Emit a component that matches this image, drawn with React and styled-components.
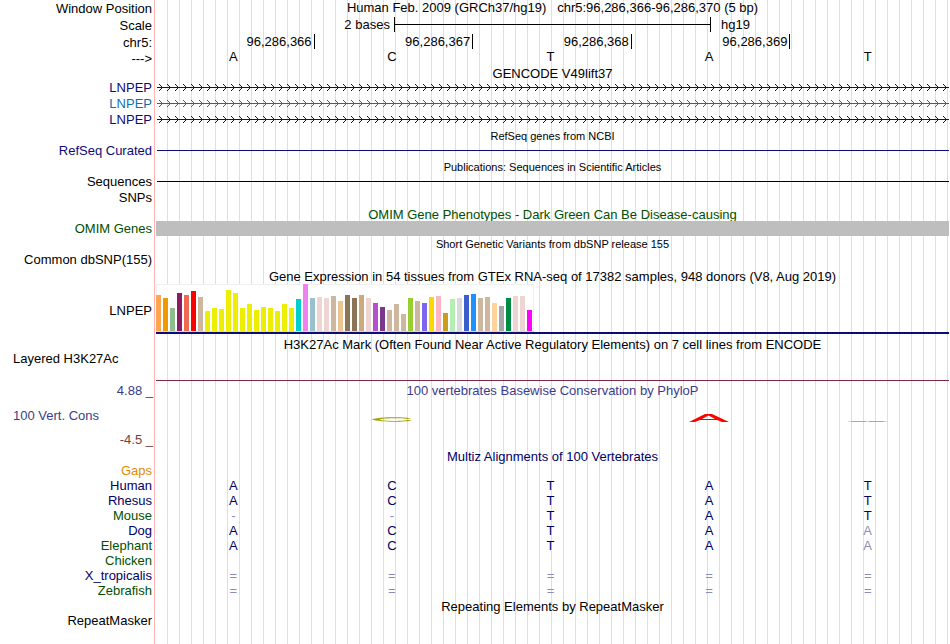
import React from "react";
import styled, { createGlobalStyle } from "styled-components";

const ink = {
  black: "#000000",
  navy: "#0c0c78",
  deep: "#000064",
  blue: "#0e6fb0",
  green: "#005000",
  orange: "#e68a00",
  violet: "#3c3c8c",
  brown: "#783c3c",
  pale: "#8c8cb8",
};

const GlobalStyle = createGlobalStyle`
  body {
    margin: 0;
    background: #ffffff;
    color: ${ink.black};
    font-family: "Liberation Sans", Arial, Helvetica, sans-serif;
    font-size: 13px;
    line-height: 15px;
  }
`;

const Browser = styled.main`
  box-sizing: border-box;
  min-height: 100vh;
  padding-right: 1px;
  background-image:
    linear-gradient(to right, #ffffff 154px, #ffb4b4 154px, #ffb4b4 155px, #ffffff 155px, #ffffff 156px, transparent 156px),
    linear-gradient(to right, transparent 11px, #dcdcf8 11px);
  background-size: auto, 12px 12px;
  background-position: 0 0, 156px 0;
`;

const Row = styled.div`
  display: grid;
  grid-template-columns: 156px minmax(0, 1fr);
  height: ${(p) => p.$h || 16}px;
`;

const Label = styled.div`
  box-sizing: border-box;
  display: flex;
  align-items: ${(p) => (p.$middle ? "center" : "flex-start")};
  justify-content: ${(p) => (p.$left ? "flex-start" : "flex-end")};
  padding: 0 ${(p) => (p.$axis ? 3 : 4)}px 0 13px;
  color: ${(p) => p.$color || ink.black};
  white-space: nowrap;
`;

const Track = styled.div`
  min-width: 0;
  display: flex;
  flex-direction: column;
  justify-content: ${(p) => p.$align || "flex-start"};
  overflow: ${(p) => (p.$clip ? "hidden" : "visible")};
`;

const LineTrack = styled(Track)`
  justify-content: center;
  padding-bottom: 1px;
`;

const Title = styled.h2`
  margin: 0;
  flex: none;
  font-size: ${(p) => (p.$small ? 11 : 13)}px;
  font-weight: 400;
  line-height: ${(p) => (p.$tight ? 15 : 17)}px;
  text-align: center;
  white-space: pre;
  color: ${(p) => p.$color || ink.black};
`;

const ScaleGrid = styled.div`
  display: grid;
  grid-template-columns: 3fr 4fr 3fr;
  height: 15px;
`;

const ScaleText = styled.span`
  padding: 0 ${(p) => (p.$end ? 10 : 4)}px;
  text-align: ${(p) => (p.$end ? "left" : "right")};
`;

const ScaleBar = styled.div`
  border: solid ${ink.black};
  border-width: 0 1px;
  background: linear-gradient(${ink.black}, ${ink.black}) center / 100% 1px no-repeat;
`;

const BaseGrid = styled.div`
  display: grid;
  grid-template-columns: repeat(5, minmax(0, 1fr));
`;

const Tick = styled.span`
  box-sizing: border-box;
  height: 15px;
  padding-right: 2px;
  border-right: 1px solid ${(p) => (p.$last ? "transparent" : ink.black)};
  text-align: right;
`;

const Base = styled.span`
  padding-right: 4px;
  line-height: 13px;
  text-align: center;
`;

const LogoCell = styled.span`
  display: flex;
  justify-content: center;
  padding: 6px 4px 0 0;
`;

const Rule = styled.div`
  height: ${(p) => p.$h || 1}px;
  margin-left: ${(p) => (p.$inset ? 1 : 0)}px;
  background: ${(p) => p.$color};
`;

const Block = styled.div`
  height: 15px;
  background: #bebebe;
`;

const Drawing = styled.svg`
  display: block;
  width: ${(p) => p.$w || "100%"};
  height: ${(p) => p.$h}px;
`;

const Alignment = styled.table`
  width: 100%;
  table-layout: fixed;
  border-collapse: collapse;
`;

const Species = styled.th`
  width: 152px;
  height: 15px;
  padding: 0 4px 0 0;
  font-weight: 400;
  text-align: right;
  color: ${(p) => p.$color};
`;

const Aligned = styled.td`
  padding: 0 4px 0 0;
  text-align: center;
  color: ${(p) => (p.$faint ? ink.pale : ink.deep)};
`;

const tissues = [
  [36, "#ffa54f"], [33, "#ee9a00"], [23, "#8fbc8f"], [38, "#8b1c62"], [36, "#ee6a50"], [40, "#ff0000"],
  [34, "#cdb79e"], [20, "#eeee00"], [23, "#eeee00"], [22, "#eeee00"], [41, "#eeee00"], [38, "#eeee00"],
  [23, "#eeee00"], [27, "#eeee00"], [21, "#eeee00"], [24, "#eeee00"], [23, "#eeee00"], [20, "#eeee00"],
  [27, "#eeee00"], [23, "#eeee00"], [32, "#00cdcd"], [47, "#ee82ee"], [33, "#9ac0cd"], [34, "#eed5d2"],
  [33, "#eed5d2"], [35, "#cdb79e"], [30, "#eec591"], [36, "#8b7355"], [33, "#8b7355"], [36, "#cdaa7d"],
  [33, "#eed5d2"], [28, "#b452cd"], [24, "#7a378b"], [21, "#cdb79e"], [27, "#cdb79e"], [17, "#cdb79e"],
  [33, "#9acd32"], [30, "#cdb79e"], [28, "#7a67ee"], [34, "#ffd700"], [35, "#ffb6c1"], [18, "#cd9b1d"],
  [32, "#b4eeb4"], [33, "#d9d9d9"], [36, "#3a5fcd"], [37, "#1e90ff"], [33, "#cdb79e"], [34, "#cdb79e"],
  [28, "#ffd39b"], [25, "#a6a6a6"], [33, "#008b45"], [35, "#eed5d2"], [35, "#eed5d2"], [21, "#ff00ff"],
];

const species = [
  ["Gaps", ink.orange, "     "],
  ["Human", ink.deep, "ACTAT"],
  ["Rhesus", ink.deep, "ACTAT"],
  ["Mouse", ink.green, "--TAT"],
  ["Dog", ink.deep, "ACTAa"],
  ["Elephant", ink.green, "ACTAa"],
  ["Chicken", ink.green, "     "],
  ["X_tropicalis", ink.deep, "====="],
  ["Zebrafish", ink.green, "====="],
];

const transcripts = [
  { id: "tx1", color: ink.navy },
  { id: "tx2", color: ink.blue },
  { id: "tx3", color: ink.navy },
];

function TitleRow({ children, h = 15, small, color, tight, clip }) {
  return (
    <Row $h={h}>
      <span />
      <Track $clip={clip}>
        <Title $small={small} $color={color} $tight={tight}>{children}</Title>
      </Track>
    </Row>
  );
}

function Transcript({ id, color }) {
  return (
    <Row>
      <Label $color={color}>LNPEP</Label>
      <Track>
        <Drawing $h={15} shapeRendering="crispEdges" aria-hidden="true">
          <defs>
            <pattern id={id} x="1" y="0" width="8" height="15" patternUnits="userSpaceOnUse">
              <path
                d="M2 4h1v1h-1z M3 5h1v1h-1z M4 6h1v1h-1z M5 7h1v1h-1z M4 8h1v1h-1z M3 9h1v1h-1z M2 10h1v1h-1z"
                fill={color}
              />
            </pattern>
          </defs>
          <rect x="1" y="0" width="100%" height="15" fill={`url(#${id})`} />
          <rect x="1" y="7" width="100%" height="1" fill={color} />
        </Drawing>
      </Track>
    </Row>
  );
}

function Expression() {
  return (
    <Drawing $w="379px" $h={48} viewBox="0 0 379 48" shapeRendering="crispEdges" role="img" aria-label="LNPEP expression by tissue">
      <rect x="0" y="0" width="378" height="48" fill="#f0f0f0" />
      <rect x="1" y="1" width="376" height="46" fill="#ffffff" />
      <rect x="0" y="47" width="378" height="1" fill="#d8d8d8" />
      {tissues.map(([value, color], i) => (
        <rect key={i} x={i * 7} y={47 - value} width="5" height={value} fill={color} />
      ))}
    </Drawing>
  );
}

function ConservationLogo() {
  return (
    <BaseGrid>
      <span />
      <LogoCell>
        <Drawing $w="42px" $h={9} viewBox="0 0 42 9" aria-hidden="true">
          <path d="M40 4.6C36 3 9 2.6 1 5.5C9 8.4 36 8.2 41 6.2L36 6C32 7.3 12 7.3 8 5.5C12 3.9 32 3.9 36 5Z" fill="#a0a000" />
        </Drawing>
      </LogoCell>
      <span />
      <LogoCell>
        <Drawing $w="42px" $h={9} viewBox="0 0 42 9" aria-hidden="true">
          <path d="M1 8L17 0H24L41 8H34L29 6H12L7 8ZM14 5H27L20.5 1.5Z" fill="#ff0000" fillRule="evenodd" />
        </Drawing>
      </LogoCell>
      <LogoCell>
        <Drawing $w="42px" $h={9} viewBox="0 0 42 9" aria-hidden="true">
          <path d="M4 7H19V8H4Z M22 7H37V8H22Z" fill="#f08c8c" />
          <path d="M1 7H4V8H1Z M19 7H22V8H19Z M37 7H40V8H37Z" fill="#f8c8c8" />
        </Drawing>
      </LogoCell>
    </BaseGrid>
  );
}

export default function App() {
  return (
    <>
      <GlobalStyle />
      <Browser>
        <Row $h={17}>
          <Label $middle>Window Position</Label>
          <Track>
            <Title $tight>{"Human Feb. 2009 (GRCh37/hg19)   chr5:96,286,366-96,286,370 (5 bp)"}</Title>
          </Track>
        </Row>
        <Row $h={17}>
          <Label $middle>Scale</Label>
          <Track>
            <ScaleGrid>
              <ScaleText>2 bases</ScaleText>
              <ScaleBar />
              <ScaleText $end>hg19</ScaleText>
            </ScaleGrid>
          </Track>
        </Row>
        <Row>
          <Label $middle>chr5:</Label>
          <Track>
            <BaseGrid>
              <Tick>96,286,366</Tick>
              <Tick>96,286,367</Tick>
              <Tick>96,286,368</Tick>
              <Tick>96,286,369</Tick>
              <Tick $last />
            </BaseGrid>
          </Track>
        </Row>
        <Row>
          <Label $middle>---&gt;</Label>
          <Track>
            <BaseGrid>
              {[..."ACTAT"].map((b, i) => <Base key={i}>{b}</Base>)}
            </BaseGrid>
          </Track>
        </Row>

        <TitleRow h={14} tight>GENCODE V49lift37</TitleRow>
        {transcripts.map((t) => <Transcript key={t.id} {...t} />)}

        <TitleRow small>RefSeq genes from NCBI</TitleRow>
        <Row>
          <Label $color={ink.navy}>RefSeq Curated</Label>
          <LineTrack><Rule $inset $color={ink.navy} /></LineTrack>
        </Row>

        <TitleRow small>Publications: Sequences in Scientific Articles</TitleRow>
        <Row>
          <Label>Sequences</Label>
          <LineTrack><Rule $inset $color={ink.black} /></LineTrack>
        </Row>
        <Row>
          <Label>SNPs</Label>
        </Row>

        <TitleRow clip color={ink.green}>OMIM Gene Phenotypes - Dark Green Can Be Disease-causing</TitleRow>
        <Row $h={15}>
          <Label $color={ink.green}>OMIM Genes</Label>
          <Track><Block /></Track>
        </Row>

        <TitleRow small h={16}>Short Genetic Variants from dbSNP release 155</TitleRow>
        <Row>
          <Label>Common dbSNP(155)</Label>
        </Row>

        <TitleRow h={16}>Gene Expression in 54 tissues from GTEx RNA-seq of 17382 samples, 948 donors (V8, Aug 2019)</TitleRow>
        <Row $h={52}>
          <Label $middle>LNPEP</Label>
          <Track>
            <Expression />
            <Rule $h={2} $color={ink.navy} />
          </Track>
        </Row>

        <TitleRow>H3K27Ac Mark (Often Found Near Active Regulatory Elements) on 7 cell lines from ENCODE</TitleRow>
        <Row>
          <Label $left>Layered H3K27Ac</Label>
        </Row>
        <Row>
          <span />
          <Track $align="flex-end">
            <Rule $color="#7c2840" />
            <Rule $h={2} $color="transparent" />
          </Track>
        </Row>

        <Row>
          <Label $axis $color={ink.violet}>4.88 _</Label>
          <Track>
            <Title $tight $color={ink.violet}>100 vertebrates Basewise Conservation by PhyloP</Title>
          </Track>
        </Row>
        <Row $h={32}>
          <Label $left $middle $color={ink.violet}>100 Vert. Cons</Label>
          <Track $align="center"><ConservationLogo /></Track>
        </Row>
        <Row $h={17}>
          <Label $axis $middle $color={ink.brown}>-4.5 _</Label>
        </Row>

        <TitleRow color={ink.deep}>Multiz Alignments of 100 Vertebrates</TitleRow>
        <Alignment>
          <tbody>
            {species.map(([name, color, bases]) => (
              <tr key={name}>
                <Species scope="row" $color={color}>{name}</Species>
                {[...bases].map((b, i) => (
                  <Aligned key={i} $faint={"-=a".includes(b)}>{b.toUpperCase()}</Aligned>
                ))}
              </tr>
            ))}
          </tbody>
        </Alignment>

        <TitleRow>Repeating Elements by RepeatMasker</TitleRow>
        <Row>
          <Label>RepeatMasker</Label>
        </Row>
      </Browser>
    </>
  );
}
